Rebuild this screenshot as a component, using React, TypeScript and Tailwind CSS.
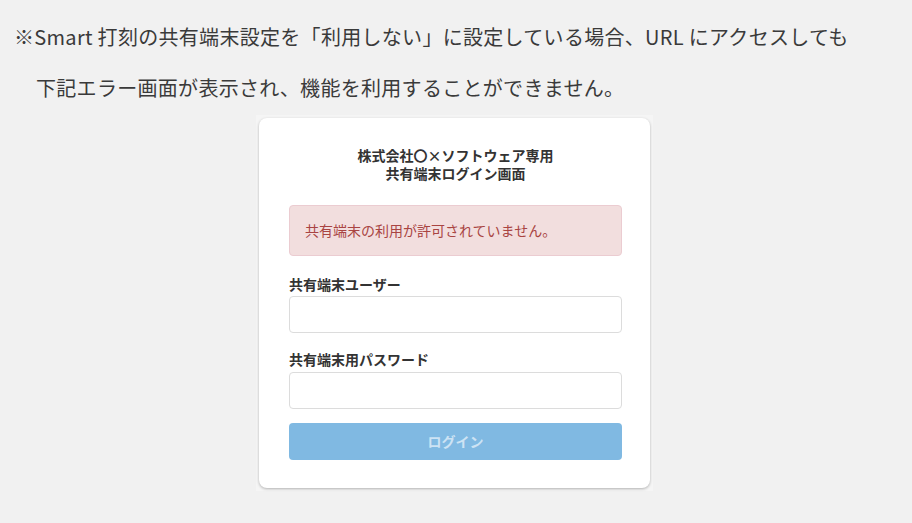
import React from "react";

const jp = { fontFamily: '"Noto Sans CJK JP", "Noto Sans", sans-serif' };

export default function App() {
  return (
    <div className="w-[912px] h-[523px] bg-[#f1f1f1] text-[#333]" style={jp}>
      <div className="pt-[23px] pl-[14px] text-[20px] leading-[28px] tracking-[0.3px] text-[#3a3a3a]">
        <p>※Smart 打刻の共有端末設定を「利用しない」に設定している場合、URL にアクセスしても</p>
        <p className="mt-[23px] pl-[22px]">下記エラー画面が表示され、機能を利用することができません。</p>
      </div>
      <div className="mt-[13px] ml-[256px] w-[397px] p-[3px] bg-[#f5f5f5]">
        <div className="bg-white rounded-[8px] shadow-[0_1px_3px_rgba(0,0,0,0.28)] pt-[28px] pb-[28px] pl-[30px] pr-[28px]">
          <div className="text-center text-[14px] leading-[18px] font-bold text-[#333]">
            <div>株式会社〇×ソフトウェア専用</div>
            <div>共有端末ログイン画面</div>
          </div>
          <div className="mt-[23px] h-[51px] flex items-center px-[15px] rounded-[4px] border border-[#ebccd1] bg-[#f2dede] text-[#a94442] text-[14px]">
            共有端末の利用が許可されていません。
          </div>
          <label className="block mt-[18px] text-[14px] leading-[20px] font-bold text-[#333]">共有端末ユーザー</label>
          <input className="block mt-[2px] w-full h-[37px] rounded-[4px] border border-[#dcdcdc] bg-white outline-none" />
          <label className="block mt-[16px] text-[14px] leading-[20px] font-bold text-[#333]">共有端末用パスワード</label>
          <input type="password" className="block mt-[3px] w-full h-[37px] rounded-[4px] border border-[#dcdcdc] bg-white outline-none" />
          <button className="block mt-[14px] w-full h-[37px] rounded-[4px] bg-[#80b9e2] text-[#cde3f4] text-[14px] font-bold">
            ログイン
          </button>
        </div>
      </div>
    </div>
  );
}
